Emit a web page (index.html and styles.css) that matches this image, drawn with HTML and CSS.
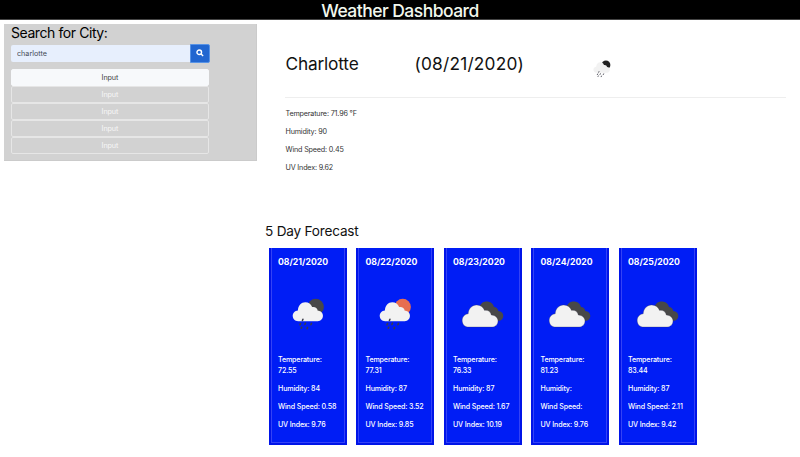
FILE: index.html
```html
<!DOCTYPE html>
<html lang="en">
<head>
<meta charset="utf-8">
<title>Weather Dashboard</title>
<link rel="stylesheet" href="styles.css">
</head>
<body>
<svg class="defs" aria-hidden="true">
  <symbol id="rain" viewBox="0 0 32 32">
    <circle class="orb" cx="23" cy="8.700" r="7.900"/>
    <path class="cloud" d="M6 22.500C2.600 22.500.7 20 .7 17.300c0-2.900 2.100-5 5-5.300C6 7.200 8.900 4.100 12.900 4.100c3.100 0 5.600 1.900 6.600 4.700 2.800-.6 5.100 1 5.500 3.600 3 0 5 2.200 5 4.900 0 3-2.100 5.200-5 5.200Z"/>
    <path class="drops" d="m10.600 20.600-.5 1.200m-1.800 3-.6 1.300m5.400-1.700-.6 1.300m6.400-1.100-.6 1.300m-3.200 2.600-.5 1.200m-5.100-1.400-.5 1"/>
  </symbol>
  <symbol id="clouds" viewBox="0 0 44 30">
    <path class="back" d="M18 8C19.500 3.500 22 1.500 25.500 1.500c4 0 6.700 2.200 7.500 5.500 2.500 0 4 1.800 4.300 4 3 .2 5 2.200 5 4.800 0 3-2 5-5 5H24Z"/>
    <path class="edge" d="M7.500 27C3.700 27 1.200 24.300 1.200 20.500c0-3.600 2.300-6.200 6-6.700C7.500 8.500 11 5 15.700 5c3.800 0 6.600 2.100 7.900 5.400 3.600-.5 6.100 1.400 6.700 4.600 3.700.1 6.700 2.700 6.700 5.900 0 3.600-2.600 6.100-6.200 6.100Z"/>
  </symbol>
</svg>
<header class="topbar"><h1>Weather Dashboard</h1></header>
<div class="layout">
  <aside class="search">
    <h2>Search for City:</h2>
    <div class="field">
      <input type="text" value="charlotte" aria-label="City">
      <button class="go" aria-label="Search"><svg viewBox="0 0 16 16"><circle cx="6.500" cy="6.500" r="4.600"/><path d="m10.200 10.200 4 4"/></svg></button>
    </div>
    <div class="history">
      <button class="active">Input</button>
      <button>Input</button>
      <button>Input</button>
      <button>Input</button>
      <button>Input</button>
    </div>
  </aside>
  <main>
    <section class="current">
      <div class="heading">
        <h2 class="city">Charlotte</h2>
        <h2 class="date">(08/21/2020)</h2>
        <svg class="now"><use href="#rain"/></svg>
      </div>
      <p>Temperature: 71.96 °F</p>
      <p>Humidity: 90</p>
      <p>Wind Speed: 0.45</p>
      <p>UV Index: 9.62</p>
    </section>
    <h3>5 Day Forecast</h3>
    <section class="cards">
      <article><h4>08/21/2020</h4><svg class="rain"><use href="#rain"/></svg><p>Temperature: 72.55</p><p>Humidity: 84</p><p>Wind Speed: 0.58</p><p>UV Index: 9.76</p></article>
      <article><h4>08/22/2020</h4><svg class="rain day"><use href="#rain"/></svg><p>Temperature: 77.31</p><p>Humidity: 87</p><p>Wind Speed: 3.52</p><p>UV Index: 9.85</p></article>
      <article><h4>08/23/2020</h4><svg class="clouds"><use href="#clouds"/></svg><p>Temperature: 76.33</p><p>Humidity: 87</p><p>Wind Speed: 1.67</p><p>UV Index: 10.19</p></article>
      <article><h4>08/24/2020</h4><svg class="clouds"><use href="#clouds"/></svg><p>Temperature: 81.23</p><p>Humidity:</p><p>Wind Speed:</p><p>UV Index: 9.76</p></article>
      <article><h4>08/25/2020</h4><svg class="clouds"><use href="#clouds"/></svg><p>Temperature: 83.44</p><p>Humidity: 87</p><p>Wind Speed: 2.11</p><p>UV Index: 9.42</p></article>
    </section>
  </main>
</div>
</body>
</html>
```
FILE: styles.css
```css
* { box-sizing: border-box; }
body { margin: 0; background: #fff; color: #111; font-family: Inter, sans-serif; overflow: hidden; }
h1, h2, h3, h4, p { margin: 0; font-weight: 400; white-space: nowrap; }
.defs { position: absolute; width: 0; height: 0; }

.topbar { height: 20px; background: #000; border-bottom: 1px solid #444; text-align: center; }
.topbar h1 { color: #f2f8ee; font-size: 17.5px; line-height: 21px; font-weight: 500; letter-spacing: -0.53px; }

.layout { display: grid; grid-template-columns: 253px 1fr; column-gap: 7.600px; padding: 4px 14px 0 4.400px; align-items: start; }

.search { height: 137px; padding: 0 47.500px 0 6.600px; background: #d2d2d2; border: 1px solid #cbcbcb; border-width: 0 1px 1px 0; }
.search h2 { height: 20px; color: #000; font-size: 14px; line-height: 18px; letter-spacing: -0.42px; }
.field { display: flex; align-items: center; height: 18px; }
.field input { flex: 1; min-width: 0; height: 17px; padding: 0 6px; border: 0; border-radius: 2px 0 0 2px; background: #e7effd; color: #444b55; font: 7.2px Inter, sans-serif; }
.go { display: grid; place-items: center; width: 20px; height: 19px; margin-right: -1px; padding: 0; border: 1px solid #5793e6; border-radius: 0 2px 2px 0; background: #2166d0; }
.go svg { width: 8px; height: 8px; fill: none; stroke: #fff; stroke-width: 2.800; }
.history { display: grid; grid-auto-rows: 17px; margin-top: 7px; }
.history button { padding: 0; border: 1px solid #e6e6e6; border-radius: 2px; background: #d2d2d2; color: #f7f7f7; font: 7.2px/15px Inter, sans-serif; letter-spacing: -0.1px; }
.history .active { background: #f7f9fb; border-color: #f7f9fb; color: #444; }

.current { height: 195px; padding-left: 20.500px; font-size: 7.2px; color: #333; letter-spacing: -0.17px; }
.heading { display: grid; grid-template-columns: 129px 178.500px 1fr; align-items: center; height: 74px; margin-bottom: 7px; padding-top: 6px; border-bottom: 1px solid #eee; }
.heading h2 { color: #111; font-size: 17.3px; line-height: 20px; letter-spacing: -0.18px; }
.heading .date { letter-spacing: 0.2px; }
.current p { height: 18px; line-height: 18px; }
main h3 { height: 29px; color: #111; font-size: 13.6px; line-height: 24px; letter-spacing: -0.2px; }

.cards { display: grid; grid-template-columns: repeat(5, 78px); column-gap: 9.500px; padding-left: 4px; }
.cards article { height: 197px; padding: 8px 8px 0 9px; background: #001df5; color: #fff; box-shadow: inset 2px 0 #0014e8, inset -2px 0 #0014e8, inset 0 -2px #0014e8, inset 3px 0 #3442f5, inset -3px 0 #3442f5, inset 0 -3px #3442f5; }
.cards h4 { height: 12px; font-size: 8.7px; line-height: 13px; font-weight: 700; }
.cards svg { display: block; }
.cards p { margin-bottom: 7px; font-size: 7.1px; line-height: 11px; font-weight: 500; letter-spacing: -0.14px; white-space: normal; }

.orb { fill: var(--orb, #484848); }
.cloud, .edge { fill: #f2f2f2; }
.edge { stroke: #34344a; stroke-width: .3; }
.back { fill: #484848; }
.drops { fill: none; stroke: #3c3c48; stroke-width: 1.500; stroke-linecap: round; }
.rain { width: 33px; height: 33px; margin: 30px 0 23px 14px; }
.day { --orb: #e76e50; }
.clouds { width: 44px; height: 30px; margin: 32px 0 24px 8px; }
.now { width: 18px; height: 18px; margin-top: 10px; --orb: #222; }
```
